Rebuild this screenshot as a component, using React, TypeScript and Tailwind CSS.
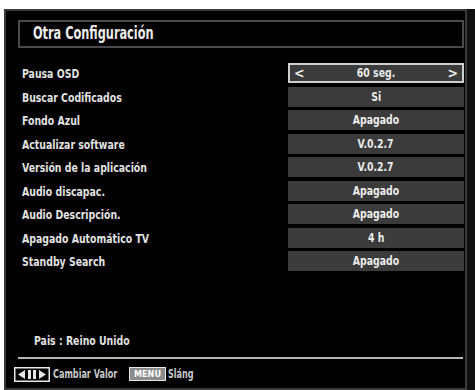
const font = { fontFamily: '"Liberation Sans Narrow", "DejaVu Sans Condensed", "Liberation Sans", sans-serif' }

interface Row {
  label: string
  value: string
  active?: boolean
}

const rows: Row[] = [
  { label: 'Pausa OSD', value: '60 seg.', active: true },
  { label: 'Buscar Codificados', value: 'Si' },
  { label: 'Fondo Azul', value: 'Apagado' },
  { label: 'Actualizar software', value: 'V.0.2.7' },
  { label: 'Versión de la aplicación', value: 'V.0.2.7' },
  { label: 'Audio discapac.', value: 'Apagado' },
  { label: 'Audio Descripción.', value: 'Apagado' },
  { label: 'Apagado Automático TV', value: '4 h' },
  { label: 'Standby Search', value: 'Apagado' },
]

function ArrowKeys() {
  return (
    <svg width="36" height="15" viewBox="0 0 36 15" className="h-[15px] w-[36px] shrink-0">
      <rect x="0.75" y="0.75" width="34.5" height="13.5" fill="#000" stroke="#e6e6e6" strokeWidth="1.5" />
      <polygon points="4,7.5 11,3 11,12" fill="#e6e6e6" />
      <rect x="14" y="3" width="3" height="9" fill="#e6e6e6" />
      <rect x="19" y="3" width="3" height="9" fill="#e6e6e6" />
      <polygon points="32,7.5 25,3 25,12" fill="#e6e6e6" />
    </svg>
  )
}

export default function App() {
  return (
    <div className="flex h-[390px] w-[475px] flex-col bg-white" style={font}>
      <div className="h-[9px] shrink-0 bg-white" />
      <div className="flex flex-1 bg-[#101010]">
        <div className="w-[4px] shrink-0 bg-white" />
        <div className="mr-[8px] flex flex-1 flex-col border-x-2 border-y-2 border-[#3a3a3a] bg-black">
          <div className="ml-[12px] mr-px mt-[9px] flex h-[28px] items-center border-2 border-[#4a4a4a] pl-[13px]">
            <span className="inline-block origin-left scale-x-[0.74] whitespace-nowrap text-[17px] font-bold text-[#ececec]">
              Otra Configuración
            </span>
          </div>

          <div className="mt-[15px] flex flex-col gap-[3.5px] pl-[16px] pr-px">
            {rows.map((r) => (
              <div key={r.label} className="flex h-[20px] items-center">
                <div className="flex-1">
                  <span className="inline-block origin-left scale-x-[0.8] whitespace-nowrap text-[13px] font-bold text-[#e2e2e2]">
                    {r.label}
                  </span>
                </div>
                <div
                  className={`relative flex h-full w-[176px] items-center justify-center bg-[#3b3b3b] text-[13px] font-bold text-[#ececec] ${
                    r.active ? 'h-[23px] border-2 border-[#cfcfcf]' : ''
                  }`}
                >
                  {r.active && <span className="absolute left-[4px] text-[14px]">&lt;</span>}
                  <span className="inline-block scale-x-[0.8] whitespace-nowrap">{r.value}</span>
                  {r.active && <span className="absolute right-[4px] text-[14px]">&gt;</span>}
                </div>
              </div>
            ))}
          </div>

          <div className="flex-1" />

          <div className="pl-[28px]">
            <span className="inline-block origin-left scale-x-[0.8] whitespace-nowrap text-[13px] font-bold text-[#e2e2e2]">
              Pais : Reino Unido
            </span>
          </div>
          <div className="ml-[12px] mr-[2px] mt-[5px] h-[2px] bg-[#b8b8b8]" />
          <div className="mb-[5px] mt-[6px] flex items-center pl-[8px] text-[12px] font-bold text-[#c8c8c8]">
            <ArrowKeys />
            <div className="ml-[3px] w-[65px]">
              <span className="inline-block origin-left scale-x-[0.75] whitespace-nowrap">Cambiar Valor</span>
            </div>
            <span className="ml-[11px] flex h-[14px] w-[37px] items-center justify-center border border-[#e6e6e6] bg-[#8c8c8c] text-[9px] leading-none text-white">
              MENU
            </span>
            <div className="ml-[2px] w-[28px]">
              <span className="inline-block origin-left scale-x-[0.75] whitespace-nowrap">Sláng</span>
            </div>
          </div>
        </div>
      </div>
    </div>
  )
}
